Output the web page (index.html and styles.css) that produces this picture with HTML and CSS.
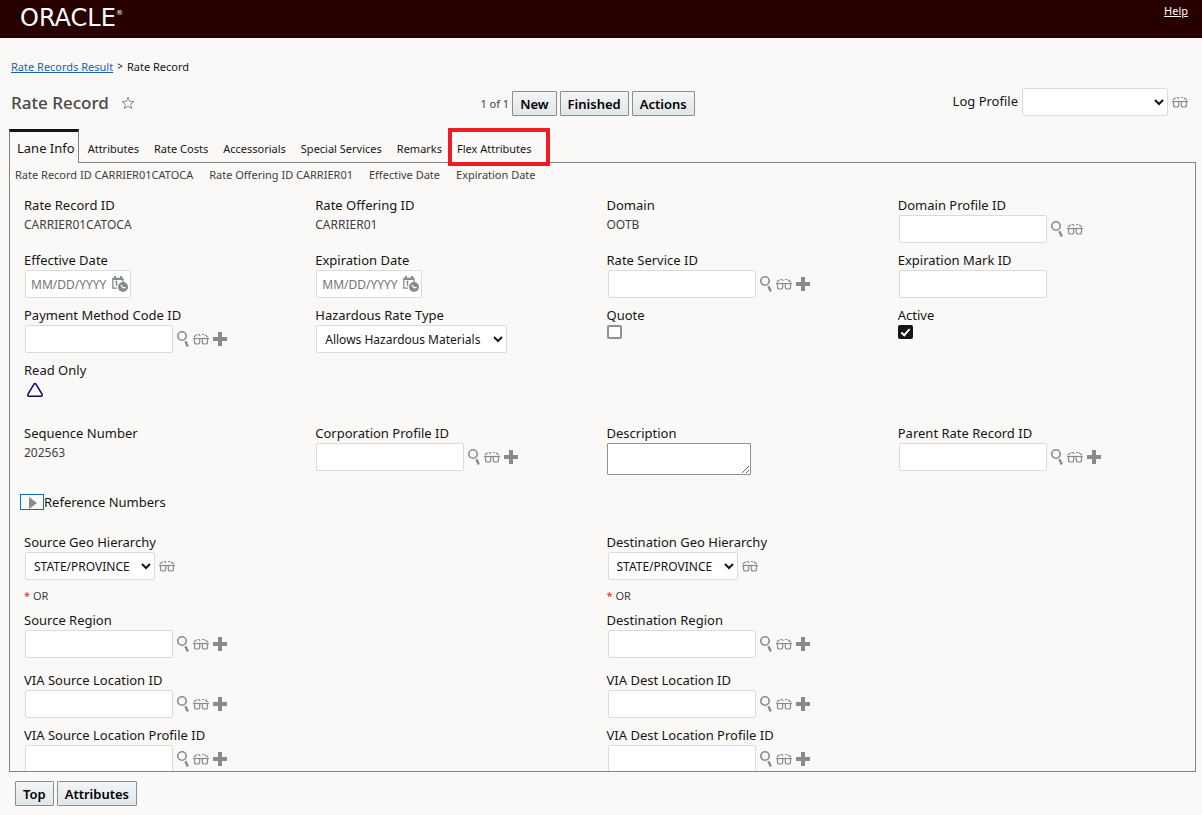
FILE: index.html
```
<!DOCTYPE html>
<html lang="en">
<head>
<meta charset="utf-8">
<meta name="viewport" content="width=device-width, initial-scale=1">
<title>Rate Record</title>
<link rel="stylesheet" href="styles.css">
</head>
<body class="page">
<svg class="sprite" aria-hidden="true">
  <symbol id="search" viewBox="0 0 12 16"><circle cx="5" cy="5" r="4.200" fill="none" stroke="currentColor" stroke-width="1.6"/><path d="M8.4 10.2 10.8 15.4" stroke="currentColor" stroke-width="2.4"/></symbol>
  <symbol id="glasses" viewBox="0 0 16 12"><g fill="none" stroke="currentColor" stroke-width="1.2"><path d="M0 5.5H16"/><path d="M1.5 5.5V9Q1.5 11 3.500 11H4.700Q6.700 11 6.700 9V5.5M9.300 5.5V9Q9.300 11 11.300 11H12.500Q14.500 11 14.500 9V5.5"/><path d="M.8 4 3.6 1.8M4.6 1.500H6L7.200 2.800M9 1.500H11M11.8 1.8 15 4"/></g></symbol>
  <symbol id="plus" viewBox="0 0 14 14"><path d="M5 0H9V5H14V9H9V14H5V9H0V5H5Z" fill="currentColor"/></symbol>
  <symbol id="calendar" viewBox="0 0 16 16"><path d="M11 6V2.5H.8V12.2H5" fill="none" stroke="currentColor" stroke-width="1.3"/><path d="M2 0H4V3H2ZM8 0H10V3H8ZM1 2H11V4H1Z" fill="currentColor"/><path d="M3.2 6.2 4.6 5.4V10" fill="none" stroke="currentColor" stroke-width="1.3"/><circle cx="11" cy="11" r="5" fill="currentColor"/><path d="M8.8 9.2 11 11.6H13.6" fill="none" stroke="#fff" stroke-width="1.2"/></symbol>
</svg>

<header class="topbar">
  <span class="logo">ORACLE<sup class="logo-mark">®</sup></span>
  <a class="help" href="#">Help</a>
</header>

<nav class="crumbs"><a href="#">Rate Records Result</a><span class="sep">&gt;</span><span>Rate Record</span></nav>

<div class="titlebar">
  <div class="heading">
    <h1 class="title">Rate Record</h1>
    <button class="icon" aria-label="Add to favorites"><svg width="14" height="14" viewBox="0 0 14 14"><path d="M7 1.3 8.6 5.3 12.9 5.6 9.6 8.3 10.7 12.5 7 10.2 3.3 12.5 4.4 8.3 1.1 5.6 5.4 5.3Z" fill="none" stroke="currentColor"/></svg></button>
  </div>
  <div class="actions"><span class="count">1 of 1</span><button class="btn">New</button><button class="btn">Finished</button><button class="btn">Actions</button></div>
  <div class="profile"><label for="log">Log Profile</label><select class="select select-log" id="log"><option></option></select><button class="icon" aria-label="View"><svg width="16" height="12"><use href="#glasses"/></svg></button></div>
</div>

<nav class="tabs">
  <a class="tab tab-active" href="#">Lane Info</a>
  <a class="tab" href="#">Attributes</a>
  <a class="tab" href="#">Rate Costs</a>
  <a class="tab" href="#">Accessorials</a>
  <a class="tab" href="#">Special Services</a>
  <a class="tab" href="#">Remarks</a>
  <a class="tab tab-marked" href="#">Flex Attributes</a>
</nav>

<main class="panel">
  <div class="summary"><span>Rate Record ID CARRIER01CATOCA</span><span>Rate Offering ID CARRIER01</span><span>Effective Date</span><span>Expiration Date</span></div>

  <div class="grid">
    <div class="field"><span class="label">Rate Record ID</span><span class="value">CARRIER01CATOCA</span></div>
    <div class="field"><span class="label">Rate Offering ID</span><span class="value">CARRIER01</span></div>
    <div class="field"><span class="label">Domain</span><span class="value">OOTB</span></div>
    <div class="field"><label class="label" for="dp">Domain Profile ID</label><div class="control"><input class="input" id="dp"><button class="icon" aria-label="Find"><svg width="12" height="16"><use href="#search"/></svg></button><button class="icon" aria-label="View"><svg width="16" height="12"><use href="#glasses"/></svg></button></div></div>

    <div class="field"><label class="label" for="ed">Effective Date</label><div class="control"><div class="date"><input class="date-input" id="ed" placeholder="MM/DD/YYYY"><button class="icon" aria-label="Pick date"><svg width="16" height="16"><use href="#calendar"/></svg></button></div></div></div>
    <div class="field"><label class="label" for="xd">Expiration Date</label><div class="control"><div class="date"><input class="date-input" id="xd" placeholder="MM/DD/YYYY"><button class="icon" aria-label="Pick date"><svg width="16" height="16"><use href="#calendar"/></svg></button></div></div></div>
    <div class="field"><label class="label" for="rs">Rate Service ID</label><div class="control"><input class="input" id="rs"><button class="icon" aria-label="Find"><svg width="12" height="16"><use href="#search"/></svg></button><button class="icon" aria-label="View"><svg width="16" height="12"><use href="#glasses"/></svg></button><button class="icon" aria-label="New"><svg width="14" height="14"><use href="#plus"/></svg></button></div></div>
    <div class="field"><label class="label" for="em">Expiration Mark ID</label><div class="control"><input class="input" id="em"></div></div>

    <div class="field"><label class="label" for="pm">Payment Method Code ID</label><div class="control"><input class="input" id="pm"><button class="icon" aria-label="Find"><svg width="12" height="16"><use href="#search"/></svg></button><button class="icon" aria-label="View"><svg width="16" height="12"><use href="#glasses"/></svg></button><button class="icon" aria-label="New"><svg width="14" height="14"><use href="#plus"/></svg></button></div></div>
    <div class="field"><label class="label" for="hz">Hazardous Rate Type</label><div class="control"><select class="select select-wide" id="hz"><option>Allows Hazardous Materials</option></select></div></div>
    <div class="field"><label class="label" for="qt">Quote</label><input class="check" type="checkbox" id="qt"></div>
    <div class="field"><label class="label" for="ac">Active</label><input class="check" type="checkbox" id="ac" checked></div>

    <div class="field field-tall field-full"><span class="label">Read Only</span><svg class="triangle" width="18" height="16" viewBox="0 0 18 16"><path d="M8 2.2Q9 .8 10 2.2L16 12.2Q16.8 14.2 15 14.2H3Q1.2 14.2 2 12.2Z" fill="none" stroke="#0b0b66" stroke-width="1.5"/></svg></div>

    <div class="field"><span class="label">Sequence Number</span><span class="value">202563</span></div>
    <div class="field"><label class="label" for="cp">Corporation Profile ID</label><div class="control"><input class="input" id="cp"><button class="icon" aria-label="Find"><svg width="12" height="16"><use href="#search"/></svg></button><button class="icon" aria-label="View"><svg width="16" height="12"><use href="#glasses"/></svg></button><button class="icon" aria-label="New"><svg width="14" height="14"><use href="#plus"/></svg></button></div></div>
    <div class="field"><label class="label" for="ds">Description</label><textarea class="textarea" id="ds"></textarea></div>
    <div class="field"><label class="label" for="pr">Parent Rate Record ID</label><div class="control"><input class="input" id="pr"><button class="icon" aria-label="Find"><svg width="12" height="16"><use href="#search"/></svg></button><button class="icon" aria-label="View"><svg width="16" height="12"><use href="#glasses"/></svg></button><button class="icon" aria-label="New"><svg width="14" height="14"><use href="#plus"/></svg></button></div></div>
  </div>

  <div class="section"><button class="expander" aria-label="Expand Reference Numbers"><svg width="8" height="12" viewBox="0 0 8 12"><path d="M0 0 8 6 0 12Z" fill="currentColor"/></svg></button><span class="section-title">Reference Numbers</span></div>

  <div class="grid grid-pair">
    <div class="field field-geo"><label class="label" for="sg">Source Geo Hierarchy</label><div class="control"><select class="select" id="sg"><option>STATE/PROVINCE</option></select><button class="icon" aria-label="View"><svg width="16" height="12"><use href="#glasses"/></svg></button></div><span class="or"><span class="star">*</span> OR</span></div>
    <div class="field field-geo"><label class="label" for="dg">Destination Geo Hierarchy</label><div class="control"><select class="select" id="dg"><option>STATE/PROVINCE</option></select><button class="icon" aria-label="View"><svg width="16" height="12"><use href="#glasses"/></svg></button></div><span class="or"><span class="star">*</span> OR</span></div>

    <div class="field field-region"><label class="label" for="sr">Source Region</label><div class="control"><input class="input" id="sr"><button class="icon" aria-label="Find"><svg width="12" height="16"><use href="#search"/></svg></button><button class="icon" aria-label="View"><svg width="16" height="12"><use href="#glasses"/></svg></button><button class="icon" aria-label="New"><svg width="14" height="14"><use href="#plus"/></svg></button></div></div>
    <div class="field field-region"><label class="label" for="dr">Destination Region</label><div class="control"><input class="input" id="dr"><button class="icon" aria-label="Find"><svg width="12" height="16"><use href="#search"/></svg></button><button class="icon" aria-label="View"><svg width="16" height="12"><use href="#glasses"/></svg></button><button class="icon" aria-label="New"><svg width="14" height="14"><use href="#plus"/></svg></button></div></div>

    <div class="field"><label class="label" for="vs">VIA Source Location ID</label><div class="control"><input class="input" id="vs"><button class="icon" aria-label="Find"><svg width="12" height="16"><use href="#search"/></svg></button><button class="icon" aria-label="View"><svg width="16" height="12"><use href="#glasses"/></svg></button><button class="icon" aria-label="New"><svg width="14" height="14"><use href="#plus"/></svg></button></div></div>
    <div class="field"><label class="label" for="vd">VIA Dest Location ID</label><div class="control"><input class="input" id="vd"><button class="icon" aria-label="Find"><svg width="12" height="16"><use href="#search"/></svg></button><button class="icon" aria-label="View"><svg width="16" height="12"><use href="#glasses"/></svg></button><button class="icon" aria-label="New"><svg width="14" height="14"><use href="#plus"/></svg></button></div></div>

    <div class="field"><label class="label" for="vsp">VIA Source Location Profile ID</label><div class="control"><input class="input" id="vsp"><button class="icon" aria-label="Find"><svg width="12" height="16"><use href="#search"/></svg></button><button class="icon" aria-label="View"><svg width="16" height="12"><use href="#glasses"/></svg></button><button class="icon" aria-label="New"><svg width="14" height="14"><use href="#plus"/></svg></button></div></div>
    <div class="field"><label class="label" for="vdp">VIA Dest Location Profile ID</label><div class="control"><input class="input" id="vdp"><button class="icon" aria-label="Find"><svg width="12" height="16"><use href="#search"/></svg></button><button class="icon" aria-label="View"><svg width="16" height="12"><use href="#glasses"/></svg></button><button class="icon" aria-label="New"><svg width="14" height="14"><use href="#plus"/></svg></button></div></div>
  </div>
</main>

<footer class="footer"><button class="btn">Top</button><button class="btn">Attributes</button></footer>
</body>
</html>
```
FILE: styles.css
```
*, *::after { box-sizing: border-box; }

.page {
  margin: 0;
  height: 100vh;
  display: flex;
  flex-direction: column;
  background: #fbf9f8;
  color: #161513;
  font: 13px/19px "Noto Sans", "Open Sans", sans-serif;
}
.page button, .page input, .page select, .page textarea { font-family: inherit; margin: 0; }
.sprite { display: none; }

.topbar {
  flex: none;
  height: 38px;
  padding: 0 14px 0 20px;
  display: flex;
  justify-content: space-between;
  background: #290000;
  color: #fff;
}
.logo { font: 24px/37px "DejaVu Sans", sans-serif; }
.logo-mark { font-size: 7px; line-height: 7px; vertical-align: 11px; }
.help { color: #fff; font-size: 11px; line-height: 22px; }

.crumbs {
  flex: none;
  display: flex;
  gap: 4px;
  padding: 19px 11px 0;
  font-size: 11px;
}
.crumbs a { color: #1a62a8; }
.crumbs .sep { font-size: 10px; }

.titlebar {
  flex: none;
  display: grid;
  grid-template-columns: 1fr auto 1fr;
  align-items: center;
  height: 53px;
  padding: 0 14px 0 11px;
}
.heading { display: flex; align-items: center; gap: 12px; }
.title { margin: 0; font-size: 17px; line-height: 24px; font-weight: 500; color: #4a4846; }
.actions { display: flex; align-items: center; gap: 3px; margin: 2px 24px 0 0; }
.count { font-size: 11px; color: #403e3c; }
.btn {
  height: 25px;
  padding: 0 7px;
  border: 1px solid #8b8d8f;
  border-radius: 1px;
  background: linear-gradient(#f3f5f6, #e1e6e9);
  color: #000;
  font-size: 13px;
  font-weight: 600;
}
.profile { display: flex; align-items: center; justify-content: flex-end; gap: 4px; margin-top: -2px; }

.icon {
  display: flex;
  flex: none;
  padding: 0;
  border: 0;
  background: none;
  color: #868b8e;
}

.tabs {
  flex: none;
  display: flex;
  gap: 15px;
  height: 34px;
  margin: 0 9px -1px;
  z-index: 1;
  font-size: 11px;
}
.tab { position: relative; padding-top: 10px; color: #161513; text-decoration: none; white-space: nowrap; }
.tab-active {
  margin-right: -6px;
  padding: 7px 3px 0 7px;
  border: 1px solid #868483;
  border-top: 3px solid #161513;
  border-bottom: 0;
  background: #fbf9f8;
  font-size: 13px;
}
.tab-marked::after {
  content: "";
  position: absolute;
  inset: -1px -18px -3px -9px;
  border: 4px solid #ee1c25;
}

.panel {
  flex: 1;
  min-height: 0;
  margin: 0 6px 0 9px;
  padding: 0 6px 0 14px;
  border: 1px solid #868483;
  overflow: hidden auto;
  scrollbar-width: none;
}
.summary { display: flex; gap: 16px; height: 33px; margin-left: -9px; padding-top: 2px; font-size: 11px; color: #403e3c; }

.grid { display: grid; grid-template-columns: repeat(4, 1fr); }
.grid-pair { grid-template-columns: repeat(2, 1fr); }
.field { min-height: 55px; display: flex; flex-direction: column; align-items: flex-start; }
.field-full { grid-column: 1 / -1; }
.field-tall { min-height: 63px; }
.field-geo { min-height: 78px; }
.field-region { min-height: 60px; }
.value { font-size: 12px; color: #403e3c; }
.control { display: flex; align-items: center; gap: 4px; margin-left: 1px; }
.input {
  width: 148px;
  height: 28px;
  border: 1px solid #dddbda;
  border-radius: 2px;
  background: #fff;
}
.select {
  width: 130px;
  height: 28px;
  padding: 0 2px 0 4px;
  border: 1px solid #dddbda;
  border-radius: 2px;
  background-color: #fff;
  color: #161513;
  font-size: 12px;
}
.select-wide { width: 191px; }
.select-log { width: 146px; }
.date {
  display: flex;
  align-items: center;
  width: 106px;
  height: 28px;
  padding: 0 2px 0 5px;
  border: 1px solid #dddbda;
  border-radius: 2px;
  background: #fff;
}
.date-input { flex: 1; min-width: 0; padding: 0; border: 0; background: none; font-size: 12px; }
.date-input::placeholder { color: #757575; }
.check {
  appearance: none;
  width: 15px;
  height: 14px;
  border: 2px solid #8f8f9d;
  border-radius: 2px;
  background: #fff;
}
.check:checked { display: flex; justify-content: center; border-color: #161513; background: #161513; }
.check:checked::after {
  content: "";
  width: 5px;
  height: 9px;
  border: solid #fff;
  border-width: 0 2px 2px 0;
  transform: rotate(42deg);
}
.triangle { margin: 2px 0 0 2px; }
.textarea { width: 144px; height: 32px; border: 1px solid #8f8f9d; border-radius: 1px; background: #fff; }

.section { display: flex; align-items: center; height: 16px; margin: 15px 0 23px -4px; }
.expander {
  display: flex;
  align-items: center;
  width: 24px;
  height: 16px;
  padding: 1px 0 0 8px;
  border: 1px solid #0a6fc2;
  background: none;
  color: #868b8e;
}
.or { margin-top: 6px; font-size: 11px; color: #403e3c; }
.star { color: #ee1c25; }

.footer { flex: none; display: flex; gap: 3px; padding: 9px 15px; }
```
